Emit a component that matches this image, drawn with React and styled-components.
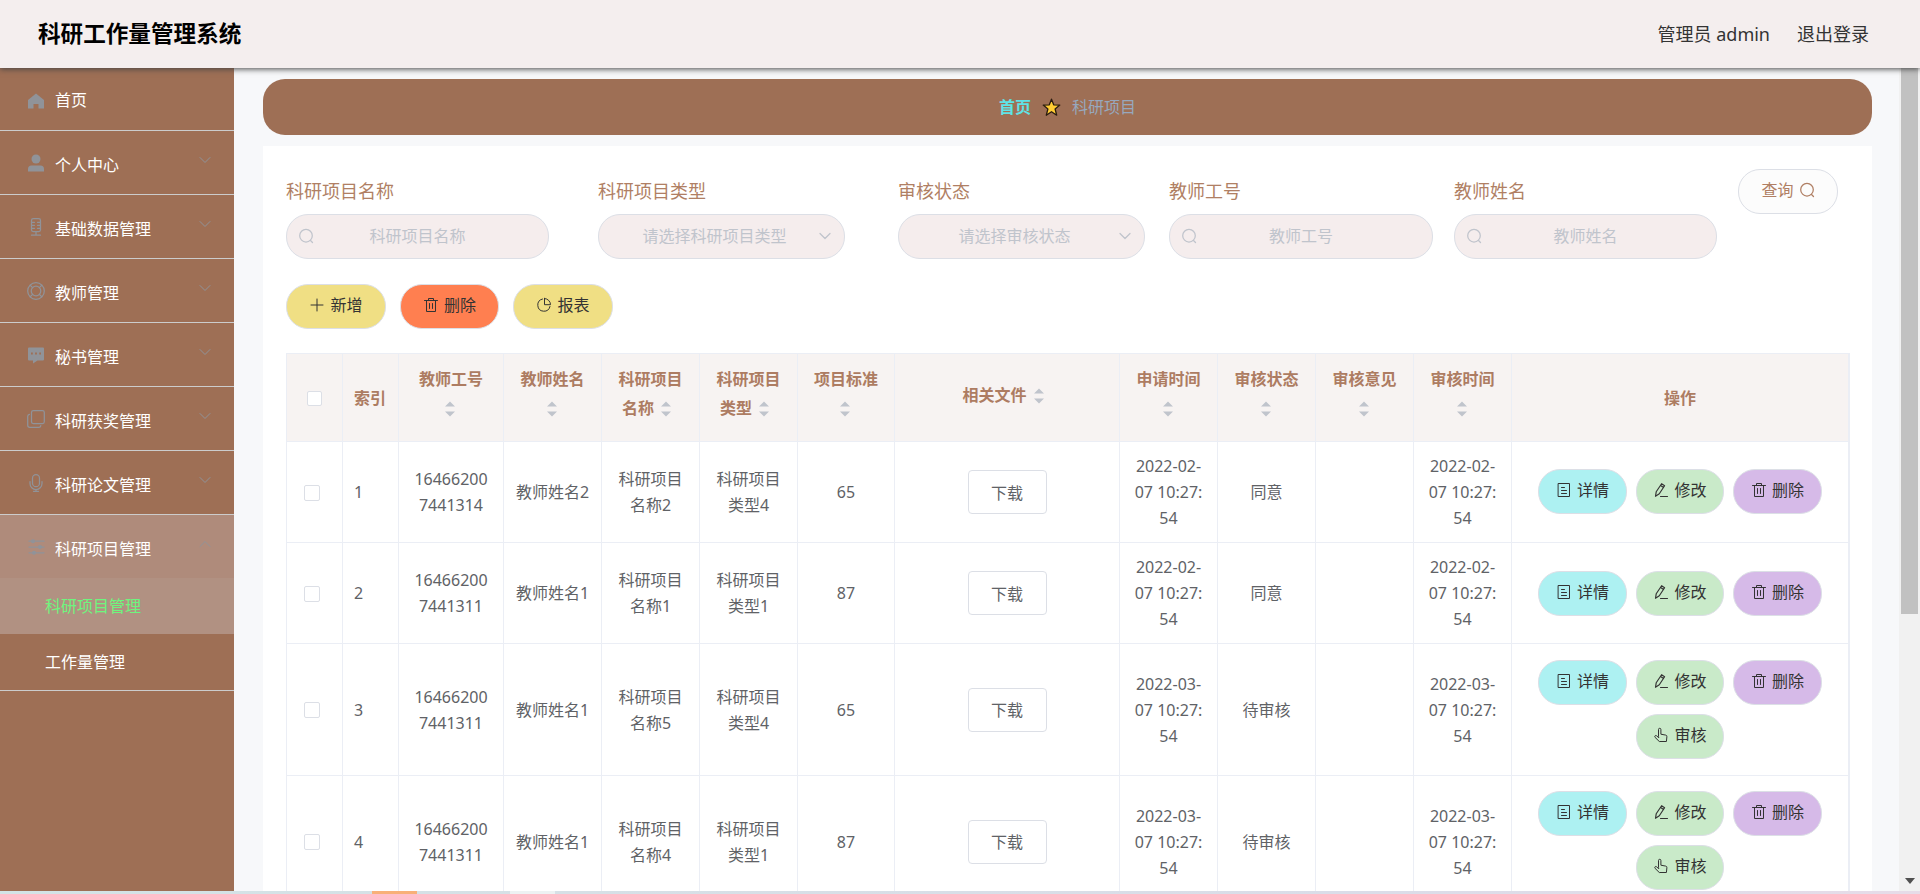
import React from 'react';
import styled, { createGlobalStyle, css } from 'styled-components';

const GlobalStyle = createGlobalStyle`
  * { box-sizing: border-box; }
  html, body { margin: 0; padding: 0; overflow: hidden; }
  body {
    font-family: "Noto Sans", "Noto Sans CJK SC", sans-serif;
    font-size: 16px;
    color: #606266;
    background: #f7f8fa;
  }
  button { font-family: inherit; }
`;

const Page = styled.div`
  display: flex;
  flex-direction: column;
  width: 1920px;
  height: 894px;
  overflow: hidden;
`;

const Header = styled.header`
  position: relative;
  z-index: 2;
  flex: none;
  display: flex;
  align-items: center;
  height: 68px;
  padding: 0 51px 0 38px;
  background: #f4eeee;
  box-shadow: 0 1px 6px #444;
`;

const Title = styled.h1`
  flex: 1;
  margin: 0;
  font-size: 22.6px;
  line-height: 32px;
  font-weight: 700;
  color: #000;
`;

const HeaderText = styled.span`
  margin-left: 27px;
  font-size: 18px;
  line-height: 28px;
  margin-top: -1px;
  color: #333;
`;

const Body = styled.div`
  flex: 1;
  min-height: 0;
  display: flex;
`;

const Sidebar = styled.nav`
  width: 234px;
  flex: none;
  background: #9e6f55;
`;

const MenuGroup = styled.div`
  border-bottom: 1px solid #ccc;
`;

const MenuTitle = styled.div`
  display: flex;
  align-items: center;
  height: ${(p) => (p.$first ? 62 : 63)}px;
  padding: 0 20px 0 27px;
  color: #fff;
  background: ${(p) => (p.$open ? '#af8b7b' : 'transparent')};
  > svg { color: #909399; }
`;

const MenuLabel = styled.span`
  flex: 1;
  padding: ${(p) => (p.$first ? '1px' : '5px')} 0 0 10px;
  line-height: 24px;
`;

const MenuIcon = styled.svg`
  flex: none;
  width: 18px;
  height: 18px;
  margin-top: ${(p) => (p.$first ? '3px' : '0')};
`;

const MenuArrow = styled.svg`
  width: 12px;
  height: 12px;
  margin: 0 3px 5px 0;
  transform: ${(p) => (p.$open ? 'rotate(180deg)' : 'none')};
`;

const SubItem = styled.div`
  height: 56px;
  padding-left: 45px;
  line-height: 57px;
  color: ${(p) => (p.$active ? '#6ef57e' : '#fff')};
  background: ${(p) => (p.$active ? '#b19182' : 'transparent')};
`;

const Main = styled.main`
  flex: 1;
  min-width: 0;
  display: flex;
  flex-direction: column;
  padding: 11px 27px 0 29px;
  overflow: hidden;
`;

const Breadcrumb = styled.div`
  flex: none;
  display: flex;
  align-items: center;
  justify-content: center;
  height: 56px;
  padding-bottom: 2px;
  border-radius: 22px;
  background: #9e6f55;
  color: #97a8be;
`;

const Home = styled.b`
  color: #5fe3e6;
`;

const Star = styled.svg`
  width: 19px;
  height: 19px;
  margin: 2px 11px 0;
`;

const Card = styled.section`
  flex: none;
  margin-top: 11px;
  padding: 23px 23px 0;
  background: #fff;
`;

const SearchForm = styled.div`
  display: flex;
  height: 90px;
`;

const Field = styled.div`
  flex: none;
  width: ${(p) => p.$w}px;
  margin-right: ${(p) => p.$gap}px;
`;

const FieldLabel = styled.div`
  height: 45px;
  font-size: 18px;
  line-height: 44px;
  color: #b07f64;
`;

const FieldBox = styled.div`
  display: flex;
  align-items: center;
  height: 45px;
  padding: 0 13px 2px 11px;
  border: 1px solid #dcdfe6;
  border-radius: 22px;
  background: #f5eded;
  color: #c0c4cc;
`;

const Placeholder = styled.span`
  flex: 1;
  text-align: center;
  line-height: 24px;
  margin: ${(p) => (p.$select ? '0' : '0 14px 0 0')};
`;

const Icon = styled.svg`
  flex: none;
  width: ${(p) => p.$size || 16}px;
  height: ${(p) => p.$size || 16}px;
`;

const Pill = styled.button`
  display: inline-flex;
  align-items: center;
  justify-content: center;
  gap: 5px;
  width: ${(p) => p.$w}px;
  height: 45px;
  padding: 0 0 3px;
  border: 1px solid #dcdfe6;
  border-radius: 22px;
  font-size: 16px;
  line-height: 24px;
  color: ${(p) => p.$color || '#333'};
  background: ${(p) => p.$bg};
`;

const Toolbar = styled.div`
  display: flex;
  gap: 14px;
  margin: 25px 0 24px;
`;

const Table = styled.table`
  width: 1564px;
  table-layout: fixed;
  border-collapse: separate;
  border-spacing: 0;
  border: 1px solid #ebeef5;
  border-bottom: 0;
`;

const cell = css`
  padding: 0 10px;
  border-right: 1px solid #ebeef5;
  border-bottom: 1px solid #ebeef5;
  vertical-align: middle;
  text-align: ${(p) => (p.$left ? 'left' : 'center')};
`;

const Th = styled.th`
  ${cell}
  height: 88px;
  padding-left: ${(p) => (p.$left ? '11px' : '0')};
  padding-right: 0;
  background: #f7f3f2;
  color: #ad7c62;
  font-weight: 700;
  line-height: 24px;
`;

const Td = styled.td`
  ${cell}
  height: ${(p) => (p.$tall ? 132 : 101)}px;
  padding-left: ${(p) => (p.$left ? '11px' : '0')};
  padding-right: 0;
  line-height: 26px;
  white-space: pre-line;
`;

const HeadStack = styled.div`
  display: flex;
  flex-direction: column;
  align-items: center;
  margin-top: ${(p) => (p.$single ? '-6px' : '-9px')};
`;

const HeadLine = styled.div`
  display: flex;
  align-items: center;
  justify-content: center;
  gap: 7px;
  height: 29px;
  padding-right: ${(p) => p.$trail}px;
`;

const SortIcon = styled.svg`
  width: 10px;
  height: 16px;
  margin-top: 2px;
`;

const Checkbox = styled.span`
  display: block;
  width: ${(p) => p.$size}px;
  height: ${(p) => p.$size}px;
  margin-left: ${(p) => p.$left}px;
  margin-top: ${(p) => p.$top || 0}px;
  border: 1px solid #dcdfe6;
  border-radius: 2px;
  background: #fff;
`;

const Download = styled.button`
  display: inline-block;
  vertical-align: middle;
  width: 79px;
  height: 44px;
  padding: 0 0 1px;
  border: 1px solid #dcdfe6;
  border-radius: 4px;
  background: #fff;
  color: #606266;
  font-size: 16px;
`;

const Actions = styled.div`
  display: flex;
  flex-wrap: wrap;
  justify-content: center;
  gap: 9px;
  padding: 0 24px;
  margin-top: ${(p) => (p.$raised ? '-2px' : '0')};
`;

const ScrollTrack = styled.div`
  flex: none;
  display: flex;
  flex-direction: column;
  justify-content: space-between;
  width: 21px;
  padding: 0 2px 7px;
  background: #f1f1f1;
`;

const ScrollThumb = styled.div`
  width: 17px;
  height: 546px;
  background: #c1c1c1;
`;

const ScrollArrow = styled.svg`
  width: 10px;
  height: 6px;
  margin-left: 4px;
`;

const BottomStrip = styled.div`
  flex: none;
  display: flex;
  height: 3px;
  background: linear-gradient(90deg, #d3e4e6 0, #d6e0e6 30%, #dadde8 70%, #e6dce8 100%);
`;

const StripMark = styled.div`
  width: 45px;
  margin-left: ${(p) => p.$ml}px;
  background: ${(p) => p.$c};
`;

const line = { fill: 'none', stroke: 'currentColor', strokeWidth: 1, strokeLinecap: 'round', strokeLinejoin: 'round' };
const bold = { ...line, strokeWidth: 1.25 };

const menuGlyphs = {
  home: <path fill="currentColor" d="M9 1.500 1 8v8.500h5.500V12h5v4.500H17V8z" />,
  user: (
    <g fill="currentColor">
      <circle cx="9" cy="5" r="4.500" />
      <path d="M1 17.500v-2.500a3.500 3.500 0 0 1 3.500-3.500h9a3.500 3.500 0 0 1 3.500 3.500v2.500z" />
    </g>
  ),
  mic1: (
    <g {...bold}>
      <rect x="4.500" y=".7" width="9" height="12.800" rx="1.800" />
      <path d="M9 13.500V17M4.500 17.200h9M5 4.300h2.500M10.500 4.300H13M5 7.300h2.500M10.500 7.300H13M5 10.300h2.500M10.500 10.300H13" />
    </g>
  ),
  help: (
    <g {...bold}>
      <circle cx="9" cy="9" r="8.300" />
      <circle cx="9" cy="9" r="4.800" />
      <path d="m3.200 3.200 2.400 2.400M14.800 3.200l-2.400 2.400M3.200 14.800l2.400-2.400M14.800 14.800l-2.400-2.400" />
    </g>
  ),
  chat: (
    <g>
      <path fill="currentColor" d="M2 1.500h14a1 1 0 0 1 1 1v11a1 1 0 0 1-1 1h-5.500L6 17.500v-3H2a1 1 0 0 1-1-1v-11a1 1 0 0 1 1-1z" />
      <path stroke="#9e6f55" strokeWidth="1.800" d="M4 7.500h1.800M8.100 7.500h1.800M12.200 7.500H14" />
    </g>
  ),
  copy: (
    <g {...bold}>
      <rect x="4.500" y=".7" width="12.800" height="12.800" rx="1.800" />
      <path d="M2.500 4.300A2 2 0 0 0 .7 6.200v9.100a2 2 0 0 0 2 2h9.100a2 2 0 0 0 2-1.700" />
    </g>
  ),
  mic2: (
    <g {...bold}>
      <rect x="5.500" y=".7" width="7" height="12" rx="3.500" />
      <path d="M3 7.500v2a6 6 0 0 0 12 0v-2M9 15.500v2M6.500 17.300h5" />
    </g>
  ),
  sliders: (
    <g {...bold}>
      <path d="M2 3.200h15M2 9h15M2 14.800h15" />
      <g fill="currentColor">
        <circle cx="6" cy="3.200" r="1.400" />
        <circle cx="13" cy="9" r="1.400" />
        <circle cx="7" cy="14.800" r="1.400" />
      </g>
    </g>
  ),
};

const glyphs = {
  search: (
    <g {...bold}>
      <circle cx="8" cy="7.700" r="6.300" />
      <path d="m12.500 12.500 2 2" />
    </g>
  ),
  plus: <path {...line} d="M8 2v12M2 8h12" />,
  trash: <path {...line} d="M1.500 3.500h13M3.500 3.500v11h9v-11M5.500 3.300V1.500h5v1.800M6.500 6.500v5M9.500 6.500v5" />,
  pie: <path {...line} d="M6.500 2A6.200 6.200 0 1 0 14 9.500M8.500 1.500v6.200h6a6.200 6.200 0 0 0-6-6.200z" />,
  doc: <path {...line} d="M2.500 1.500h11v13h-11zM5.500 5.500h3M5.500 8.500h5M5.500 11.500h5" />,
  edit: <path {...line} strokeWidth="1.150" d="M3.200 9.800 8.600 1.700l3 2L6.300 11.800l-3.800 2.500zM7.600 3.500l3 2M7.500 14.500h7" />,
  pointer: (
    <path {...line} d="M5.500 9V2.500a1.200 1.200 0 0 1 2.400 0v4.700l4.800.9a1.500 1.500 0 0 1 1.200 1.600l-.5 4.800H6.300L2 10.300a1.100 1.100 0 0 1 1.600-1.500L5.500 10.500z" />
  ),
};

const Glyph = ({ name, size }) => (
  <Icon $size={size} viewBox="0 0 16 16">{glyphs[name]}</Icon>
);

const Chevron = () => (
  <Icon $size={12} viewBox="0 0 12 12"><path {...bold} d="m1 3.500 5 5 5-5" /></Icon>
);

const Sort = () => (
  <SortIcon viewBox="0 0 10 16">
    <path fill="#c0c4cc" d="M5 .5 10 5.500H0zM5 15.500 10 10.500H0z" />
  </SortIcon>
);

const menu = [
  { icon: 'home', label: '首页' },
  { icon: 'user', label: '个人中心', sub: true },
  { icon: 'mic1', label: '基础数据管理', sub: true },
  { icon: 'help', label: '教师管理', sub: true },
  { icon: 'chat', label: '秘书管理', sub: true },
  { icon: 'copy', label: '科研获奖管理', sub: true },
  { icon: 'mic2', label: '科研论文管理', sub: true },
  { icon: 'sliders', label: '科研项目管理', sub: true, open: ['科研项目管理', '工作量管理'] },
];

const fields = [
  { label: '科研项目名称', w: 263, gap: 49 },
  { label: '科研项目类型', w: 247, gap: 53, select: true },
  { label: '审核状态', w: 247, gap: 24, select: true },
  { label: '教师工号', w: 264, gap: 21 },
  { label: '教师姓名', w: 263, gap: 21 },
];

const widths = [56, 56, 105, 98, 98, 98, 97, 225, 98, 98, 98, 98, 337];

const heads = [
  ['教师工号', ''],
  ['教师姓名', ''],
  ['科研项目', '名称'],
  ['科研项目', '类型'],
  ['项目标准', ''],
  ['相关文件'],
  ['申请时间', ''],
  ['审核状态', ''],
  ['审核意见', ''],
  ['审核时间', ''],
];

const rows = [
  { no: '16466200\n7441314', name: '教师姓名2', project: '科研项目\n名称2', type: '科研项目\n类型4', score: 65, date: '2022-02-\n07 10:27:\n54', state: '同意', raised: true },
  { no: '16466200\n7441311', name: '教师姓名1', project: '科研项目\n名称1', type: '科研项目\n类型1', score: 87, date: '2022-02-\n07 10:27:\n54', state: '同意' },
  { no: '16466200\n7441311', name: '教师姓名1', project: '科研项目\n名称5', type: '科研项目\n类型4', score: 65, date: '2022-03-\n07 10:27:\n54', state: '待审核', review: true },
  { no: '16466200\n7441311', name: '教师姓名1', project: '科研项目\n名称4', type: '科研项目\n类型1', score: 87, date: '2022-03-\n07 10:27:\n54', state: '待审核', review: true, raised: true },
];

function SideMenu() {
  return (
    <Sidebar>
      {menu.map((m, i) => (
        <MenuGroup key={m.label}>
          <MenuTitle $first={i === 0} $open={!!m.open}>
            <MenuIcon $first={i === 0} viewBox="0 0 18 18">{menuGlyphs[m.icon]}</MenuIcon>
            <MenuLabel $first={i === 0}>{m.label}</MenuLabel>
            {m.sub && (
              <MenuArrow $open={!!m.open} viewBox="0 0 12 12">
                <path {...line} d="m1 3.500 5 5 5-5" />
              </MenuArrow>
            )}
          </MenuTitle>
          {m.open && m.open.map((s, j) => <SubItem key={s} $active={j === 0}>{s}</SubItem>)}
        </MenuGroup>
      ))}
    </Sidebar>
  );
}

function ProjectTable() {
  return (
    <Table>
      <colgroup>{widths.map((w, i) => <col key={i} style={{ width: w }} />)}</colgroup>
      <thead>
        <tr>
          <Th><Checkbox $size={15} $left={20} $top={2} /></Th>
          <Th $left>索引</Th>
          {heads.map((h) => (
            <Th key={h.join('')}>
              <HeadStack $single={h.length === 1}>
                {h.map((t, i) => {
                  const last = i === h.length - 1;
                  return (
                    <HeadLine key={i} $trail={last ? (t ? 8 : 2) : 0}>
                      {t && <span>{t}</span>}
                      {last && <Sort />}
                    </HeadLine>
                  );
                })}
              </HeadStack>
            </Th>
          ))}
          <Th>操作</Th>
        </tr>
      </thead>
      <tbody>
        {rows.map((r, i) => (
          <tr key={i}>
            <Td $tall={r.review}><Checkbox $size={16} $left={17} $top={1} /></Td>
            <Td $left>{i + 1}</Td>
            <Td>{r.no}</Td>
            <Td>{r.name}</Td>
            <Td>{r.project}</Td>
            <Td>{r.type}</Td>
            <Td>{r.score}</Td>
            <Td><Download>下载</Download></Td>
            <Td>{r.date}</Td>
            <Td>{r.state}</Td>
            <Td />
            <Td>{r.date}</Td>
            <Td>
              <Actions $raised={r.raised}>
                <Pill $w={89} $bg="#adf1f2"><Glyph name="doc" />详情</Pill>
                <Pill $w={88} $bg="#c9eac9"><Glyph name="edit" />修改</Pill>
                <Pill $w={89} $bg="#d6bae8"><Glyph name="trash" />删除</Pill>
                {r.review && <Pill $w={88} $bg="#c9eac9"><Glyph name="pointer" />审核</Pill>}
              </Actions>
            </Td>
          </tr>
        ))}
      </tbody>
    </Table>
  );
}

export default function App() {
  return (
    <Page>
      <GlobalStyle />
      <Header>
        <Title>科研工作量管理系统</Title>
        <HeaderText>管理员 admin</HeaderText>
        <HeaderText>退出登录</HeaderText>
      </Header>
      <Body>
        <SideMenu />
        <Main>
          <Breadcrumb>
            <Home>首页</Home>
            <Star viewBox="0 0 19 19">
              <path fill="#fc3" stroke="#2a1c10" strokeWidth="1.300" strokeLinejoin="round" d="m9.500 1.200 2.200 5.600 6.100.3-4.700 3.900 1.600 6.200-5.200-3.500-5.200 3.500 1.600-6.200L1.200 7.100l6.100-.3z" />
            </Star>
            <span>科研项目</span>
          </Breadcrumb>
          <Card>
            <SearchForm>
              {fields.map((f) => (
                <Field key={f.label} $w={f.w} $gap={f.gap}>
                  <FieldLabel>{f.label}</FieldLabel>
                  <FieldBox>
                    {!f.select && <Glyph name="search" />}
                    <Placeholder $select={f.select}>{f.select ? `请选择${f.label}` : f.label}</Placeholder>
                    {f.select && <Chevron />}
                  </FieldBox>
                </Field>
              ))}
              <Pill $w={100} $bg="#fcfcfc" $color="#b07f64">查询<Glyph name="search" /></Pill>
            </SearchForm>
            <Toolbar>
              <Pill $w={100} $bg="#f0df84"><Glyph name="plus" />新增</Pill>
              <Pill $w={99} $bg="#ff7f50"><Glyph name="trash" />删除</Pill>
              <Pill $w={100} $bg="#f0df84"><Glyph name="pie" />报表</Pill>
            </Toolbar>
            <ProjectTable />
          </Card>
        </Main>
        <ScrollTrack>
          <ScrollThumb />
          <ScrollArrow viewBox="0 0 10 6"><path fill="#505050" d="M0 0h10L5 6z" /></ScrollArrow>
        </ScrollTrack>
      </Body>
      <BottomStrip>
        <StripMark $ml={372} $c="#f8b078" />
        <StripMark $ml={93} $c="#edf2f3" />
      </BottomStrip>
    </Page>
  );
}
